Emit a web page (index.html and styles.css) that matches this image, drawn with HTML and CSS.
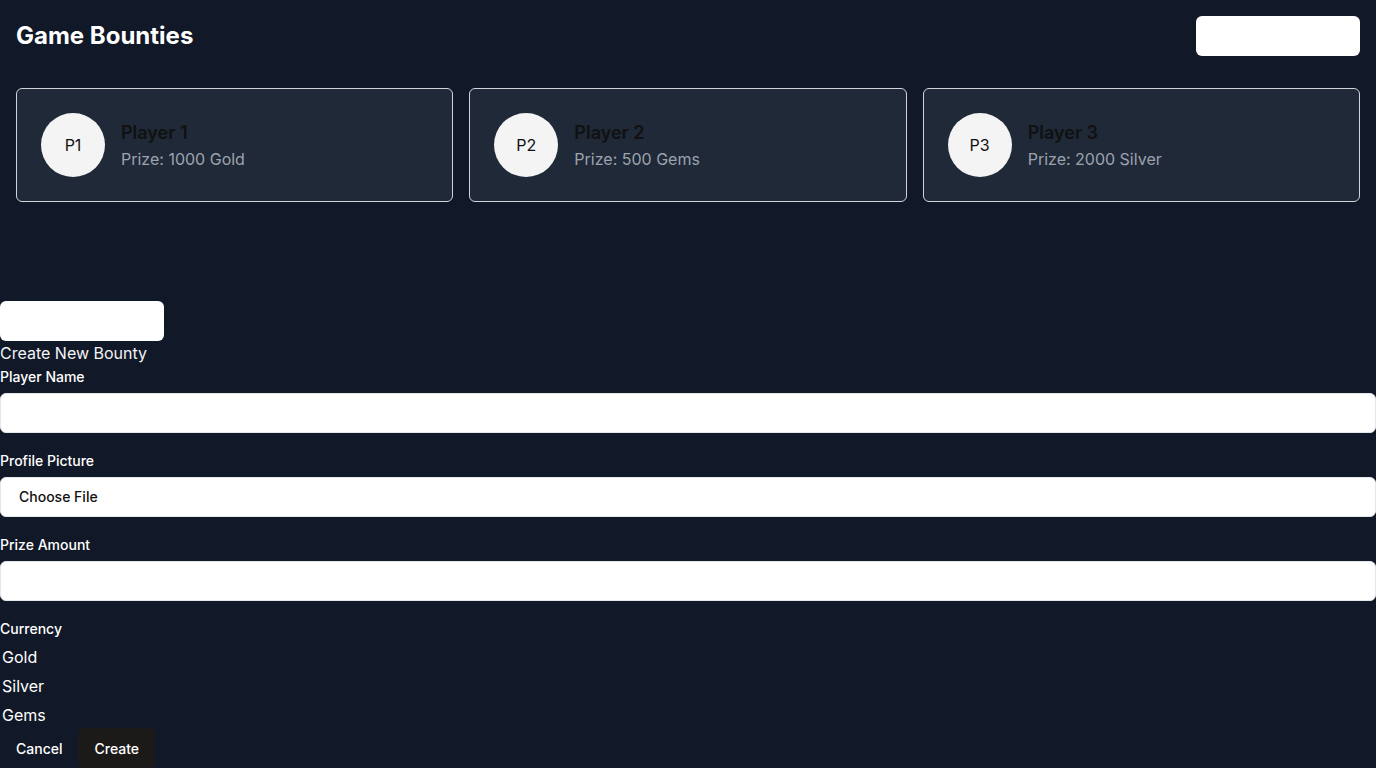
FILE: index.html
```html
<!DOCTYPE html>
<html>
<head>
<meta charset="utf-8">
<link rel="stylesheet" href="styles.css">
</head>
<body>
<div class="page">
  <header class="header">
    <h1 class="title">Game Bounties</h1>
    <button class="white-btn"></button>
  </header>
  <section class="cards">
    <div class="card">
      <div class="avatar">P1</div>
      <div class="info"><div class="name">Player 1</div><div class="prize">Prize: 1000 Gold</div></div>
    </div>
    <div class="card">
      <div class="avatar">P2</div>
      <div class="info"><div class="name">Player 2</div><div class="prize">Prize: 500 Gems</div></div>
    </div>
    <div class="card">
      <div class="avatar">P3</div>
      <div class="info"><div class="name">Player 3</div><div class="prize">Prize: 2000 Silver</div></div>
    </div>
  </section>
</div>
<section class="form">
  <button class="white-btn small"></button>
  <div class="form-title">Create New Bounty</div>
  <div class="field">
    <div class="label">Player Name</div>
    <div class="input"></div>
  </div>
  <div class="field">
    <div class="label">Profile Picture</div>
    <div class="input file">Choose File</div>
  </div>
  <div class="field">
    <div class="label">Prize Amount</div>
    <div class="input"></div>
  </div>
  <div class="field last">
    <div class="label">Currency</div>
    <div class="options">
      <div class="option">Gold</div>
      <div class="option">Silver</div>
      <div class="option">Gems</div>
    </div>
  </div>
  <div class="actions">
    <button class="btn cancel">Cancel</button>
    <button class="btn create">Create</button>
  </div>
</section>
</body>
</html>
```
FILE: styles.css
```css
* { box-sizing: border-box; }
html, body { margin: 0; padding: 0; }
body {
  background: #111827;
  font-family: Inter, "Noto Sans", sans-serif;
  color: #ffffff;
  height: 768px;
  overflow: hidden;
}
.page { padding: 16px 16px 0; }
.header {
  display: flex;
  justify-content: space-between;
  align-items: center;
  height: 40px;
}
.title {
  margin: 0;
  font-size: 24px;
  line-height: 32px;
  font-weight: 700;
  color: #fff;
}
.white-btn {
  width: 164px;
  height: 40px;
  background: #ffffff;
  border: none;
  border-radius: 6px;
  padding: 0;
}
.cards {
  margin-top: 32px;
  display: grid;
  grid-template-columns: repeat(3, 1fr);
  gap: 16px;
}
.card {
  background: #1f2937;
  border: 1px solid #d1d5db;
  border-radius: 6px;
  padding: 24px;
  display: flex;
  align-items: center;
  gap: 16px;
}
.avatar {
  width: 64px;
  height: 64px;
  border-radius: 50%;
  background: #f4f4f4;
  color: #111;
  display: flex;
  align-items: center;
  justify-content: center;
  font-size: 16px;
}
.name {
  font-size: 18px;
  line-height: 28px;
  font-weight: 600;
  color: #111;
}
.prize {
  font-size: 16px;
  line-height: 24px;
  color: #9ca3af;
}
.form { margin-top: 99px; }
.form .small { display: block; }
.form-title {
  font-size: 16px;
  line-height: 24px;
  padding-bottom: 1px;
  color: #f3f4f6;
}
.field { margin-bottom: 18px; }
.field.last { margin-bottom: 0; }
.label {
  font-size: 14px;
  line-height: 20px;
  font-weight: 500;
  margin-top: 1px;
  margin-bottom: 6px;
}
.field.last .label { margin-bottom: 4px; }
.input {
  height: 40px;
  background: #fff;
  border-radius: 6px;
  border: 1px solid #e5e7eb;
}
.input.file {
  color: #111;
  font-size: 14px;
  font-weight: 500;
  line-height: 38px;
  padding-left: 18px;
}
.option {
  font-size: 16px;
  line-height: 29px;
  padding-left: 2px;
}
.actions { display: flex; margin-top: -2px; }
.btn {
  height: 40px;
  border: none;
  font-family: inherit;
  font-size: 14px;
  font-weight: 500;
  color: #fff;
  padding: 0 16px;
  background: transparent;
  border-radius: 6px;
}
.btn.create { background: #1c1a19; }
```
